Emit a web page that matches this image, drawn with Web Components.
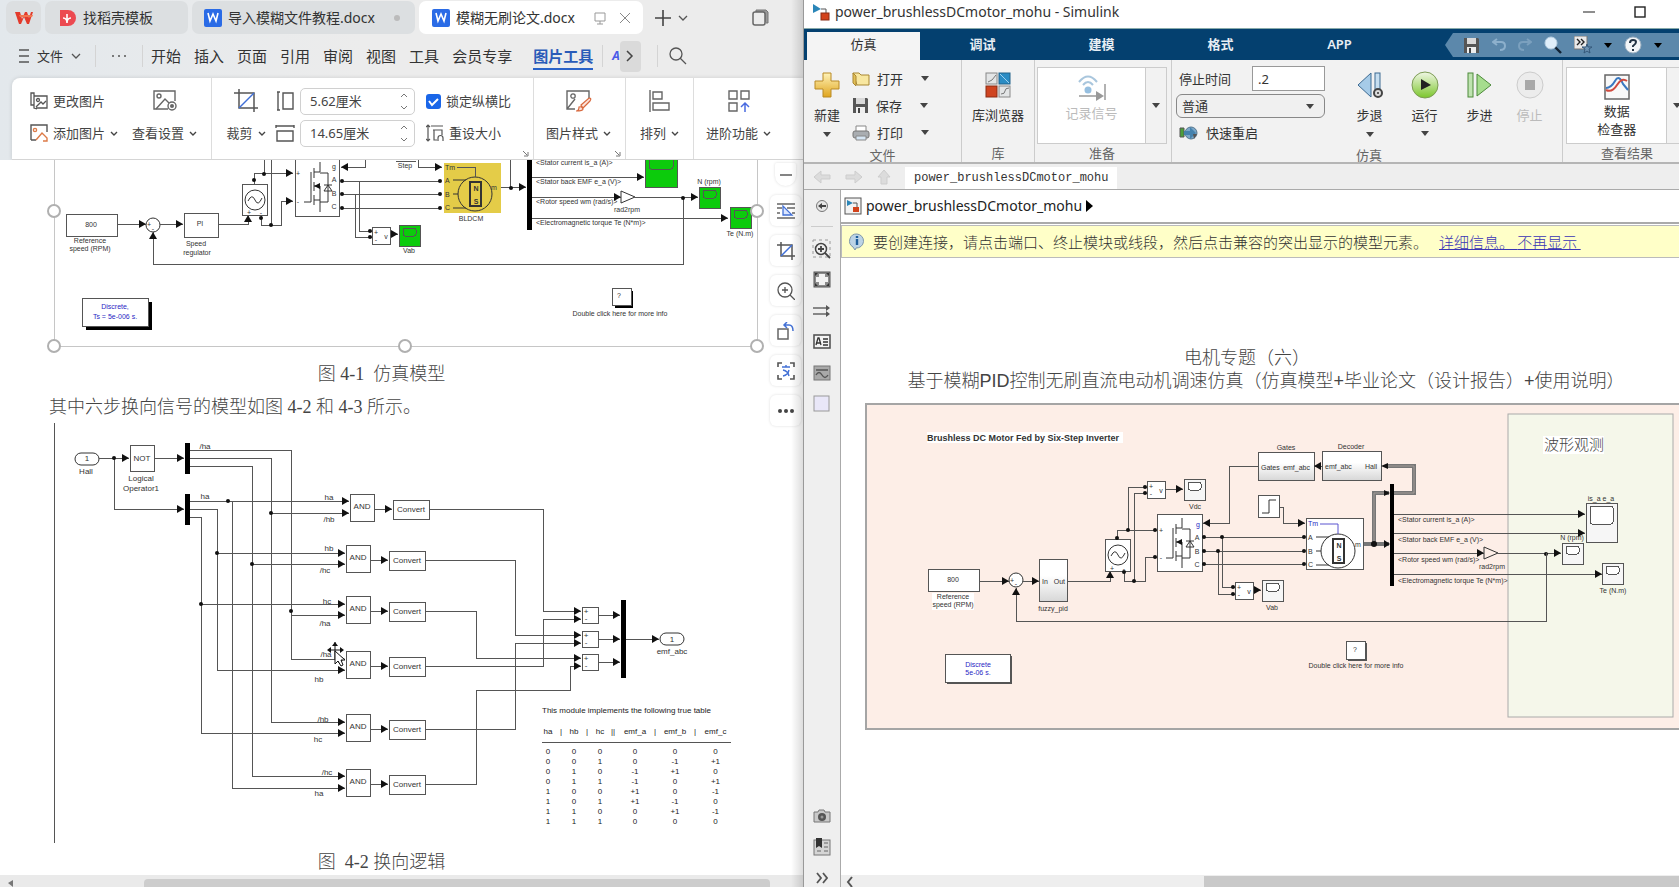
<!DOCTYPE html>
<html lang="zh-CN">
<head>
<meta charset="utf-8">
<title>power_brushlessDCmotor_mohu - Simulink</title>
<style>
html,body{height:100%}
body{margin:0;overflow:hidden;background:#fff;color:#333;font:13px/20px "Noto Sans","Noto Sans CJK SC",sans-serif}
</style>
</head>
<body>
<split-desktop>
  <wps-window slot="left"></wps-window>
  <simulink-window slot="right"></simulink-window>
</split-desktop>
<script>
const define = (name, css, html) => customElements.define(name, class extends HTMLElement {
  constructor() {
    super();
    this.attachShadow({ mode: 'open' }).innerHTML =
      `<style>*{box-sizing:border-box}${css}</style>${typeof html === 'function' ? html(this) : html}`;
  }
});

/* ---------- icons ---------- */
const floppy = '<path d="M1 1h14l1 1v14H1z" fill="#565656"/><path d="M4 1h9v6H4z" fill="#d9d9d9"/><path d="M4 10h9v6H4z" fill="#eee"/><path d="M6 11h2v5H6z" fill="#444"/>';
const crop = '<g fill="none" stroke="#555" stroke-width="1.5"><path d="M5 0v19h19M0 4h20v19"/><path d="M5 19 20 4" stroke="#3f6fd8"/></g>';
const ICONS = {
  wps: [18, 14, '<path d="M0 1h5l2 7 3-7h2l2 6 2-6h2l-4 12h-2l-3-7-3 7H4z" fill="#e33b2c"/><path d="M4 4h14l-1 2H5z" fill="#f2754f"/>'],
  docer: [17, 18, '<path d="M1 1h8a8 8 0 0 1 0 16H1z" fill="#ec4a51"/><path d="M4 9c4 0 4 5 4 5s0-5 4-5M8 13V5" stroke="#fff" stroke-width="1.6" fill="none"/>'],
  word: [18, 18, '<rect width="18" height="18" rx="2" fill="#2a6be6"/><path d="m4 4 2 8 3-7 3 7 2-8" fill="none" stroke="#fff" stroke-width="1.6"/>'],
  screen: [14, 14, '<path d="M2 2h10v8H2zM4 13h6M7 10v3" fill="none" stroke="#999"/>'],
  close: [12, 12, '<path d="m1 1 10 10M11 1 1 11" stroke="#888" fill="none"/>'],
  plus: [16, 16, '<path d="M8 0v16M0 8h16" stroke="#444" stroke-width="1.6"/>'],
  chev: [10, 6, '<path d="m1 1 4 4 4-4" fill="none" stroke="#555" stroke-width="1.3"/>'],
  chevs: [8, 5, '<path d="m1 1 3 3 3-3" fill="none" stroke="#444" stroke-width="1.4"/>'],
  up: [8, 5, '<path d="m1 4 3-3 3 3" fill="none" stroke="#777"/>'],
  down: [8, 5, '<path d="m1 1 3 3 3-3" fill="none" stroke="#777"/>'],
  right: [8, 12, '<path d="m1 1 5 5-5 5" fill="none" stroke="#444" stroke-width="1.5"/>'],
  restore: [17, 17, '<path d="M4 3V1h10l2 2v11h-2" fill="#999" stroke="#777"/><rect x="1" y="3" width="12" height="13" rx="2" fill="#ececec" stroke="#666" stroke-width="1.5"/>'],
  menu: [10, 14, '<path d="M0 1h10M0 7h10M0 13h10" stroke="#555" stroke-width="1.3"/>'],
  dots: [16, 4, '<g fill="#555"><circle cx="2" cy="2" r="1"/><circle cx="8" cy="2" r="1"/><circle cx="14" cy="2" r="1"/></g>'],
  dots3: [16, 6, '<g fill="#444"><circle cx="2" cy="3" r="2"/><circle cx="8" cy="3" r="2"/><circle cx="14" cy="3" r="2"/></g>'],
  search: [18, 18, '<circle cx="7" cy="7" r="6" fill="none" stroke="#555" stroke-width="1.3"/><path d="m11 11 6 6" stroke="#555" stroke-width="1.3"/>'],
  launch: [6, 6, '<path d="M0 0l4 4M5 1v4H1" fill="none" stroke="#777"/>'],
  swap: [18, 18, '<g fill="none" stroke="#555" stroke-width="1.3"><path d="M4 4V1H1v12h3M4 4h13v12H6M4 4v12l3 1"/><circle cx="8" cy="8" r="1.5"/><path d="m6 15 5-5 2 2 3-3"/></g>'],
  addpic: [18, 18, '<path d="M1 16V1h16v7M1 16h5" fill="none" stroke="#555" stroke-width="1.4"/><g fill="none" stroke="#dd7b48" stroke-width="1.4"><circle cx="5" cy="6" r="1.6"/><path d="m6 16 6-7 5 5v3h-4"/></g>'],
  view: [24, 24, '<g fill="none" stroke="#666" stroke-width="1.4"><path d="M15 20H1V2h21v10"/><circle cx="6" cy="7" r="2"/><path d="m3 20 9-10 4 4"/><circle cx="19" cy="17" r="4"/></g><circle cx="19" cy="17" r="2" fill="#666"/>'],
  crop: [24, 24, crop],
  cropsm: [18, 18, '<g fill="none" stroke="#555" stroke-width="1.5"><path d="M4 0v14h14M0 3h15v15"/><path d="M4 14 15 3" stroke="#3f6fd8"/></g>'],
  tall: [18, 20, '<path d="M1 1h3M2 1v18M1 19h3M7 2h10v16H7z" fill="none" stroke="#555" stroke-width="1.4"/>'],
  wide: [20, 18, '<path d="M1 1v3M1 2h18M19 1v3M2 7h16v10H2z" fill="none" stroke="#555" stroke-width="1.4"/>'],
  reset: [18, 18, '<path d="M2 1v16M0 3l2-2 2 2M0 15l2 2 2-2M5 2h12M7 6h9v5M8 6v10h3M12 17v-3a2 2 0 0 1 5 0v3" fill="none" stroke="#555" stroke-width="1.2"/>'],
  style: [26, 24, '<path d="M9 20H1V2h22v7M1 20 9 10" fill="none" stroke="#666" stroke-width="1.4"/><circle cx="7" cy="7" r="2.2" fill="none" stroke="#666" stroke-width="1.3"/><path d="m15 16 8-7q3 0 1 3l-7 7zM10 22q3 0 3-4 3-1 4 2 0 2-7 2z" fill="#fbe3da" stroke="#d8683d" stroke-width="1.2"/>'],
  align: [22, 22, '<path d="M1 0v22M4 2h9v7H4zM4 13h16v7H4z" fill="none" stroke="#666" stroke-width="1.4"/>'],
  more: [22, 22, '<path d="M1 1h8v8H1zM13 1h8v8h-8zM1 13h8v8H1z" fill="none" stroke="#666" stroke-width="1.4"/><path d="M17 22v-9M13 17l4-4 4 4" fill="none" stroke="#4a6be0" stroke-width="1.5"/>'],
  minus: [12, 4, '<path d="M0 2h12" stroke="#666" stroke-width="1.6"/>'],
  wrap: [18, 16, '<path d="M0 1h18M0 5h5M10 5h8M0 10h3M15 10h3M0 15h18" stroke="#666" stroke-width="1.4"/><path d="M6 3v9h9z" fill="#dbe6ff" stroke="#4371d6" stroke-width="1.3"/>'],
  zoomin: [18, 18, '<g fill="none" stroke="#555" stroke-width="1.3"><circle cx="8" cy="8" r="7"/><path d="m13 13 5 5M8 5v6M5 8h6"/></g>'],
  rotate: [18, 18, '<rect x="1" y="7" width="10" height="10" fill="none" stroke="#666" stroke-width="1.5"/><path d="M7 3h5q4 0 4 6M10 0 7 3l3 3" fill="none" stroke="#4371d6" stroke-width="1.5"/>'],
  scan: [18, 18, '<path d="M1 5V1h4M13 1h4v4M17 13v4h-4M5 17H1v-4" fill="none" stroke="#555" stroke-width="1.6"/><path d="M5 5h8M9 3v2M6 8q5 1 6 6M12 8q-1 5-6 6" fill="none" stroke="#4371d6" stroke-width="1.4"/>'],
  /* Simulink */
  model: [18, 18, '<path d="M1 1v9l8-4z" fill="#2b86b8"/><path d="M9 6h5v4" fill="none" stroke="#555"/><rect x="9" y="10" width="8" height="7" fill="#d2431c" stroke="#8a2d14"/>'],
  modelbox: [18, 18, '<rect x="1" y="1" width="16" height="16" fill="#f3f3f3" stroke="#555"/><path d="M3 3v6l6-3z" fill="#2b86b8"/><path d="M9 6h4v4" fill="none" stroke="#555"/><rect x="9" y="10" width="6" height="5" fill="#d2431c"/>'],
  min: [12, 12, '<path d="M0 6h12" stroke="#444" stroke-width="1.2"/>'],
  max: [12, 12, '<rect x="1" y="1" width="10" height="10" fill="none" stroke="#222" stroke-width="1.4"/>'],
  tri: [8, 5, '<path d="M0 0h8L4 5z" fill="#444"/>'],
  trib: [8, 5, '<path d="M0 0h8L4 5z" fill="#000"/>'],
  play: [7, 12, '<path d="M0 0v12l7-6z" fill="#000"/>'],
  newp: [26, 26, '<defs><linearGradient id="y" x1="0" y1="0" x2="0" y2="1"><stop stop-color="#fff3b8"/><stop offset="1" stop-color="#e0a51f"/></linearGradient></defs><path d="M9 1h8v8h8v8h-8v8H9v-8H1V9h8z" fill="url(#y)" stroke="#b98a25"/>'],
  open: [18, 16, '<path d="M1 2h6l2 2h8v10H5z" fill="#f8e7a0" stroke="#a98732"/><path d="M1 2l3 3v10l-3-3z" fill="#e3bf56" stroke="#a98732"/>'],
  save: [17, 17, floppy],
  print: [18, 16, '<path d="M4 1h10v6H4z" fill="#fff" stroke="#888"/><rect x="1" y="6" width="16" height="7" rx="2" fill="#a9adb1" stroke="#777"/><path d="M4 11h10v4H4z" fill="#d5e5f3" stroke="#888"/>'],
  lib: [26, 26, '<rect x="1" y="1" width="11" height="11" fill="#e3e5e6" stroke="#888"/><path d="m3 10 4-2 4-5" stroke="#777" fill="none"/><rect x="14" y="1" width="11" height="11" fill="#2a8cc4" stroke="#23638a"/><path d="m15 2 9 9" stroke="#9fd0ee"/><rect x="1" y="14" width="11" height="11" fill="#cf4420" stroke="#8a2d14"/><rect x="14" y="14" width="11" height="11" fill="#e3e5e6" stroke="#888"/><path d="M16 22q4 0 4-3t4-3" stroke="#777" fill="none"/>'],
  log: [28, 28, '<g fill="none" stroke="#a9c6dd" stroke-width="2"><path d="M1 8q9-11 18 0M5 11q5-6 10 0"/></g><circle cx="10" cy="16" r="3.5" fill="#96bfe0"/><path d="M1 22h18M27 10v16" stroke="#999" stroke-width="1.5"/><path d="M18 17v10l8-5z" fill="#999"/>'],
  fast: [20, 14, '<path d="M1 2h4v9H1z" fill="#4c9f3a" stroke="#555"/><circle cx="12" cy="7" r="6" fill="#7aa7c9" stroke="#55758d"/><path d="M5 5h6V1l6 6-6 6V9H5z" fill="#4582ad"/><path d="M14 8l4 0-3 5z" fill="#555"/>'],
  back: [26, 26, '<path d="M14 1v24L1 13z" fill="#a6cbe8" stroke="#3d6a91"/><rect x="18" y="1" width="5" height="18" fill="#c6def0" stroke="#3d6a91"/><circle cx="21" cy="21" r="4" fill="#ddd" stroke="#444" stroke-width="2"/><circle cx="21" cy="21" r="1" fill="#333"/>'],
  run: [28, 28, '<defs><linearGradient id="g" x1="0" y1="0" x2="0" y2="1"><stop stop-color="#f1f7e6"/><stop offset="1" stop-color="#7bc62b"/></linearGradient></defs><circle cx="14" cy="14" r="13" fill="url(#g)" stroke="#7d9c55"/><path d="M10 8v11l10-5z" fill="#222"/>'],
  fwd: [26, 26, '<rect x="1" y="1" width="5" height="24" fill="#bfe3b0" stroke="#4d8a3b"/><path d="M10 2v22l14-11z" fill="#a6dd8e" stroke="#4d8a3b"/>'],
  stop: [28, 28, '<circle cx="14" cy="14" r="13" fill="#ececec" stroke="#ccc"/><rect x="9" y="9" width="10" height="10" fill="#a8a8a8"/>'],
  insp: [26, 26, '<rect x="1" y="1" width="24" height="24" fill="#f8f8f8" stroke="#666" stroke-width="1.5"/><path d="M2 14q5 0 9-7t8 3l5 6" fill="none" stroke="#3a78c0" stroke-width="2"/><path d="M2 16q6 3 11-5t10-4" fill="none" stroke="#d04a3e" stroke-width="2"/>'],
  undo: [14, 14, '<path d="M1 4h8q4 0 4 4t-5 4M5 1 1 4l4 3" fill="none" stroke="#8db0cc" stroke-width="2"/>'],
  redo: [14, 14, '<path d="M13 4H5Q1 4 1 8t5 4M9 1l4 3-4 3" fill="none" stroke="#7ba0be" stroke-width="2"/>'],
  find: [18, 18, '<path d="m10 10 7 7" stroke="#123" stroke-width="2.4"/><circle cx="7" cy="7" r="6" fill="#dfeefa" stroke="#b7cfe2"/>'],
  fav: [18, 18, '<rect width="13" height="13" fill="#e9e9e9" stroke="#777"/><path d="m3 3 3 3-3 3M7 3l3 3-3 3" fill="none" stroke="#222" stroke-width="1.4"/><path d="m13 8 1 3h4l-3 2 1 4-3-2-3 2 1-4-3-2h4z" fill="#6d93b3" stroke="#35587a"/>'],
  help: [18, 18, '<circle cx="9" cy="9" r="8" fill="#f2f5f8" stroke="#9db1c2"/><path d="M6 7q0-3 3-3t3 2q0 2-3 4v1M9 13v2" fill="none" stroke="#234" stroke-width="2"/>'],
  aleft: [18, 14, '<path d="M8 1 1 7l7 6V9h9V5H8z" fill="#dcdcdc" stroke="#cdcdcd"/>'],
  aright: [18, 14, '<path d="m10 1 7 6-7 6V9H1V5h9z" fill="#dcdcdc" stroke="#cdcdcd"/>'],
  aup: [14, 16, '<path d="m7 1 6 7h-3v7H4V8H1z" fill="#dcdcdc" stroke="#cdcdcd"/>'],
  hide: [14, 14, '<circle cx="7" cy="7" r="5.5" fill="#e6e6e6" stroke="#777"/><path d="M3 7l4-3v2h4v2H7v2z" fill="#444"/>'],
  rzoom: [20, 20, '<path d="M1 1h17v17H1z" fill="none" stroke="#999" stroke-dasharray="3 3"/><circle cx="9" cy="10" r="5.5" fill="#eee" stroke="#444" stroke-width="1.5"/><path d="m13 14 5 5M9 7v6M6 10h6" stroke="#444" stroke-width="1.8"/>'],
  fit: [18, 17, '<rect x="1" y="1" width="16" height="15" fill="#8a8a8a" stroke="#555"/><path d="M6 3h6v3h3v5h-3v3H6v-3H3V6h3z" fill="#f2f2f2"/><path d="M2 2h3L2 5zM16 2v3l-3-3zM2 15v-3l3 3zM16 15h-3l3-3z" fill="#333"/>'],
  lines: [18, 12, '<path d="M0 3h14M0 9h14" stroke="#666" stroke-width="1.6"/><path d="M13 0l4 3-4 3zM13 6l4 3-4 3z" fill="#555"/>'],
  anno: [18, 15, '<rect x="1" y="1" width="16" height="13" fill="#f4f4f4" stroke="#555" stroke-width="1.6"/><path d="m3 11 2-7h1l2 7M4 9h3M10 5h5M10 8h5M10 11h5" fill="none" stroke="#333" stroke-width="1.3"/>'],
  img: [18, 16, '<rect x="1" y="1" width="16" height="14" fill="#a9a9a9" stroke="#777"/><path d="M3 5h12M3 10q3-5 6 0t6 0" fill="none" stroke="#555" stroke-width="1.4"/>'],
  area: [18, 18, '<rect x="1" y="1" width="15" height="15" fill="#e9e7f8" stroke="#999"/>'],
  cam: [18, 14, '<path d="M1 3h4l1-2h5l1 2h5v10H1z" fill="#c9c9c9" stroke="#777"/><circle cx="9" cy="8" r="4" fill="#555"/><circle cx="9" cy="8" r="1.5" fill="#999"/>'],
  book: [18, 18, '<rect x="1" y="2" width="16" height="15" fill="#d5d5d5" stroke="#777"/><path d="M3 0h6v10L6 8l-3 2z" fill="#333"/><path d="M11 5h4M11 9h4M4 13h4M11 13h4" stroke="#666"/>'],
  dbl: [12, 12, '<path d="m1 1 4 5-4 5M7 1l4 5-4 5" fill="none" stroke="#555" stroke-width="1.8"/>'],
  info: [18, 18, '<path d="M9 1a7 7 0 1 1-1 14l-1 2-2-3A7 7 0 0 1 9 1z" fill="#bcd3e6" stroke="#7e97ab"/><path d="M9 3v2M9 6v6" stroke="#1e5d99" stroke-width="2.4"/>'],
};
class UiIcon extends HTMLElement {
  constructor() { super(); this.attachShadow({ mode: 'open' }); }
  connectedCallback() {
    const [w, h, body] = ICONS[this.getAttribute('name')];
    this.shadowRoot.innerHTML = `<style>:host{display:inline-flex;flex:none}svg{display:block}</style><svg width="${w}" height="${h}" viewBox="0 0 ${w} ${h}" aria-hidden="true">${body}</svg>`;
  }
}
customElements.define('ui-icon', UiIcon);
const ic = n => `<ui-icon name="${n}"></ui-icon>`;

/* ---------- block diagram drawing ---------- */
const F = (x1, y1, x2, y2, fill = '#fff', extra = '') => `<rect class="b" x="${x1}" y="${y1}" width="${x2 - x1}" height="${y2 - y1}" fill="${fill}" ${extra}/>`;
const bar = (x1, y1, x2, y2) => `<rect x="${x1}" y="${y1}" width="${x2 - x1}" height="${y2 - y1}" fill="#000"/>`;
const T = (x, y, s, anchor = 'middle', cls = '') => `<text x="${x}" y="${y + 3}" text-anchor="${anchor}" class="${cls}">${s.replace(/</g, '&lt;')}</text>`;
const dot = (x, y) => `<circle cx="${x}" cy="${y}" r="2" class="d"/>`;
const dots = a => a.map(([x, y]) => dot(x, y)).join('');
const W = (pts, head = true) => {
  const p = pts.trim().split(/\s+/).map(s => s.split(',').map(Number));
  let out = `<polyline class="w" points="${pts}"/>`;
  if (head) {
    const [x, y] = p[p.length - 1], [a, b] = p[p.length - 2];
    const dx = Math.sign(x - a), dy = Math.sign(y - b);
    out += `<polygon class="d" points="${x},${y} ${x - 7 * dx + 4 * dy},${y - 7 * dy + 4 * dx} ${x - 7 * dx - 4 * dy},${y - 7 * dy - 4 * dx}"/>`;
  }
  return out;
};
const scope = (x, y, w, h, fill, screen) => F(x, y, x + w, y + h, fill) + `<rect class="b" x="${x + 4}" y="${y + 3}" width="${w - 8}" height="${w > 25 ? 18 : 8}" rx="2" fill="${screen}"/>`;
const source = (x, y, h) => F(x, y, x + 25, y + h) + `<circle class="c" cx="${x + 13}" cy="${y + 16}" r="10"/><path class="c" d="M${x + 6} ${y + 17}q4-8 7-1t7-2"/>` + T(x + 7, y + h - 3, '+') + T(x + 19, y + h - 3, '-');
const mosfet = (x, y) => `<path class="c" d="M${x + 16} ${y}v10h-6M${x + 16} ${y + 50}v-26h-6M${x + 10} ${y + 38}h6M${x + 10} ${y + 6}v10M${x + 10} ${y + 20}v9M${x + 10} ${y + 33}v10M${x + 7} ${y + 10}v30h-7M${x + 16} ${y + 11}h8v29h-8M${x + 20} ${y + 23}h8"/><path class="c" d="M${x + 20} ${y + 29}h8l-4-6z"/><path class="d" d="M${x + 10} ${y + 24}l6-3v6z"/>`;
const motor = (x, y) => `<circle class="c" cx="${x}" cy="${y}" r="17"/><path class="c" d="M${x - 22} ${y - 14}h13M${x - 22} ${y}h5M${x - 22} ${y + 14}h13"/><rect class="c h" x="${x - 5}" y="${y - 12}" width="11" height="24"/>` + T(x + 1, y - 6, 'N', 'middle', 'bold') + T(x + 1, y + 7, 'S', 'middle', 'bold');
const measure = (x, y) => F(x, y, x + 18, y + 17) + T(x + 4, y + 5, '+') + T(x + 4, y + 12, '-') + T(x + 14, y + 9, 'v');
const svgCss = `svg{display:block;overflow:hidden;font:7px/1 "Liberation Sans",sans-serif}
text{fill:#333}.b{stroke:#555;stroke-width:1;shape-rendering:crispEdges}.w{fill:none;stroke:#555;stroke-width:1;shape-rendering:crispEdges}
.c{fill:none;stroke:#333;stroke-width:1}.h{stroke-width:2}.d{fill:#111}.blue{fill:#2a1fc4}.bold{font-weight:700}`;

define('model-figure', `:host{display:block}${svgCss}.sel{fill:none;stroke:#c6c6c6;stroke-width:1;shape-rendering:crispEdges}.hd{fill:#fff;stroke:#b0b0b0;stroke-width:2}`, () => {
  const G = '#0ccb0c';
  return `<svg width="771" height="196" viewBox="0 160 771 196" role="img" aria-label="仿真模型">
  <path class="sel" d="M54 150V346H757V150"/>
  ${F(66, 214, 117, 236)}${T(91, 224, '800')}${T(90, 240, 'Reference')}${T(90, 248, 'speed (RPM)')}
  ${W('117,224 146,224')}<circle class="c" cx="153" cy="225" r="7"/>${T(149, 224, '+')}${T(153, 228, '-')}
  ${W('160,224 183,224')}${F(184, 213, 218, 237)}${T(200, 223, 'PI')}${T(196, 243, 'Speed')}${T(197, 252, 'regulator')}
  ${W('218,224 248,224 248,215')}${source(242, 184, 31)}
  ${W('254,184 254,173 293,173')}${W('261,216 261,225 281,225 281,201 293,201')}
  ${W('264,150 264,174', false)}${W('271,150 271,225', false)}${dots([[264, 174], [271, 225], [254, 180], [261, 218]])}
  ${F(295, 140, 339, 216)}${mosfet(304, 162)}${T(298, 173, '+')}${T(298, 201, '-')}
  ${T(334, 166, 'g')}${T(334, 179, 'A')}${T(334, 193, 'B')}${T(334, 206, 'C')}
  ${W('365,150 365,167 341,167')}${W('341,181 440,181', false)}${W('341,194 440,194', false)}${W('341,208 440,208', false)}
  ${W('359,181 359,231 372,231', false)}${W('355,194 355,237 372,237', false)}
  ${dots([[342, 181], [342, 194], [342, 208], [440, 181], [440, 194], [440, 208], [370, 231], [370, 237]])}
  ${measure(372, 227)}${W('390,234 398,234')}${scope(399, 225, 21, 21, G, G)}${T(409, 250, 'Vab')}
  ${W('396,161 416,161', false)}${T(405, 165, 'Step')}${W('418,150 418,167 442,167')}
  <rect x="444" y="163" width="57" height="50" fill="#e4cc48"/>${motor(475, 194)}${W('457,167 475,167 475,177', false)}
  ${T(445, 167, 'Tm', 'start')}${T(445, 180, 'A', 'start')}${T(445, 194, 'B', 'start')}${T(445, 207, 'C', 'start')}${T(494, 187, 'm')}
  ${T(471, 218, 'BLDCM')}
  ${W('501,187 526,187')}${W('510,150 510,187', false)}${dot(511, 188)}${bar(527, 150, 532, 230)}
  ${W('532,177 644,177')}${scope(645, 148, 32, 39, G, G)}
  ${W('532,197 621,197')}<path class="c" d="M621 191v12l14-6z"/>${W('635,197 698,197')}${scope(699, 187, 21, 21, G, G)}${T(709, 181, 'N (rpm)')}
  ${W('532,218 728,218')}${scope(730, 207, 21, 21, G, G)}${T(740, 233, 'Te (N.m)')}
  ${T(536, 162, '<Stator current is_a (A)>', 'start')}${T(536, 181, '<Stator back EMF e_a (V)>', 'start')}${T(536, 201, '<Rotor speed wm (rad/s)>', 'start')}${T(536, 222, '<Electromagnetic torque Te (N*m)>', 'start')}${T(627, 209, 'rad2rpm')}
  ${W('683,197 683,264 153,264 153,232')}${dot(683, 198)}
  <path d="M86 302h66v28H86z" fill="#000"/>${F(82, 298, 148, 326)}${T(115, 306, 'Discrete,', 'middle', 'blue')}${T(115, 316, 'Ts = 5e-006 s.', 'middle', 'blue')}
  <path d="M615 291h18v17h-18z" fill="#000"/>${F(612, 288, 631, 305)}${T(619, 295, '?')}${T(620, 313, 'Double click here for more info')}
  ${[[54, 211], [757, 211], [54, 346], [405, 346], [757, 346]].map(([x, y]) => `<circle class="hd" cx="${x}" cy="${y}" r="6"/>`).join('')}
  </svg>`;
});

const TRUTH = ['0 0 0 0 0 0', '0 0 1 0 -1 +1', '0 1 0 -1 +1 0', '0 1 1 -1 0 +1', '1 0 0 +1 0 -1', '1 0 1 +1 -1 0', '1 1 0 0 +1 -1', '1 1 1 0 0 0'];
define('truth-table', `:host{display:block;font:8px/10px "Liberation Sans",sans-serif;color:#222}
table{border-collapse:collapse;table-layout:fixed;width:189px}caption{text-align:left;white-space:nowrap;padding-bottom:11px}
th,td{padding:0;font-weight:400;text-align:center;white-space:nowrap}thead th{padding-bottom:5px;border-bottom:1px solid #555}tbody tr:first-child td{padding-top:4px}`,
`<table><caption>This module implements the following true table</caption>
<colgroup><col style="width:12px"><col style="width:14px"><col style="width:12px"><col style="width:14px"><col style="width:12px"><col style="width:14px"><col style="width:30px"><col style="width:10px"><col style="width:30px"><col style="width:10px"><col></colgroup>
<thead><tr><th>ha</th><th>|</th><th>hb</th><th>|</th><th>hc</th><th>||</th><th>emf_a</th><th>|</th><th>emf_b</th><th>|</th><th>emf_c</th></tr></thead>
<tbody>${TRUTH.map(r => '<tr>' + r.split(' ').map(v => `<td>${v}</td>`).join('<td></td>') + '</tr>').join('')}</tbody></table>`);

define('logic-figure', `:host{display:block;position:relative}${svgCss}svg{font-size:8px}truth-table{position:absolute;left:542px;top:284px}`, () => {
  const rows = [[350, 494, 501, 513], [346, 545, 553, 564], [346, 596, 604, 615], [346, 651, 659, 670], [346, 714, 722, 733], [346, 769, 776, 788]];
  const gates = rows.map(([x, y]) => F(x, y, x + 24, y + 27) + T(x + 12, y + 12, 'AND') + W(`${x + 24},${y + 15} ${x + 42},${y + 15}`) + F(x + 43, y + 6, x + 79, y + 25) + T(x + 61, y + 15, 'Convert')).join('');
  const lab = [[205, 446, '/ha'], [205, 496, 'ha'], [329, 497, 'ha'], [329, 519, '/hb'], [329, 548, 'hb'], [325, 570, '/hc'], [327, 601, 'hc'], [325, 623, '/ha'], [326, 654, '/ha'], [319, 679, 'hb'], [323, 719, '/hb'], [318, 739, 'hc'], [327, 772, '/hc'], [319, 793, 'ha']];
  const sum = y => F(582, y, 598, y + 16) + T(586, y + 4, '+') + T(586, y + 11, '-') + W(`598,${y + 8} 620,${y + 8}`);
  return `<svg width="771" height="422" viewBox="0 422 771 422" role="img" aria-label="换向逻辑">
  <path d="M54 423h1v420h-1z" fill="#555"/>
  <rect class="c" x="75" y="453" width="24" height="12" rx="6"/>${T(87, 458, '1')}${T(86, 471, 'Hall')}
  ${W('99,458 129,458')}${F(130, 445, 154, 471)}${T(142, 458, 'NOT')}${T(141, 478, 'Logical')}${T(141, 488, 'Operator1')}
  ${W('154,458 184,458')}${bar(185, 443, 190, 474)}${W('114,458 114,509 184,509')}${bar(185, 494, 190, 525)}
  ${W('190,450 291,450 291,659 345,659')}${W('291,615 345,615')}${W('190,458 271,458 271,722 345,722')}${W('271,513 349,513')}
  ${W('190,466 252,466 252,776 345,776')}${W('252,564 345,564')}${W('190,501 349,501')}${W('232,501 232,788 345,788')}
  ${W('190,509 217,509 217,670 345,670')}${W('217,553 345,553')}${W('190,517 201,517 201,733 345,733')}${W('201,604 345,604')}
  ${dots([[114, 458], [291, 611], [271, 513], [252, 564], [228, 501], [217, 553], [201, 604]])}
  ${gates}${lab.map(l => T(...l)).join('')}
  ${W('429,509 543,509 543,611 581,611')}${W('425,560 515,560 515,635 581,635')}${W('425,611 476,611 476,658 581,658')}
  ${W('425,666 543,666 543,619 581,619')}${W('425,729 515,729 515,643 581,643')}${W('425,784 476,784 476,690 570,690 570,666 581,666')}
  ${sum(607)}${sum(631)}${sum(654)}${bar(621, 600, 626, 678)}${W('626,639 659,639')}
  <rect class="c" x="660" y="633" width="24" height="12" rx="6"/>${T(672, 639, '1')}${T(672, 651, 'emf_abc')}
  <path d="M335 642v17M329 650h13" stroke="#111" fill="none"/><path d="M335 642l-3 4h6zM327 650l4-3v6zM344 650l-4-3v6z" fill="#111"/>
  <path d="M335 651v13l3-3 3 5 2-1-2-5h4z" fill="#fff" stroke="#111"/>
  </svg><truth-table></truth-table>`;
});

/* ---------- left window ---------- */
define('wps-titlebar', `:host{display:flex;height:34px;padding:1px 34px 0 6px;gap:4px;align-items:stretch}
button{all:unset;box-sizing:border-box;display:flex;align-items:center;border-radius:7px;background:#dcdfe1;font-size:14px;color:#333;white-space:nowrap}
.home{width:35px;justify-content:center}.t2{width:143px;padding-left:14px;gap:7px}.t3{width:223px;padding-left:12px;gap:6px}.t4{width:224px;padding-left:13px;gap:6px;background:#fff}
.end{margin-left:auto;margin-right:15px;width:6px;height:6px;border-radius:3px;background:#bbb}
.t4 .s{margin-left:auto;margin-right:12px;display:flex;gap:12px;align-items:center}
.plain{background:none;padding:0 3px 0 8px}.last{margin-left:auto}`,
`<button class="home" aria-label="WPS">${ic('wps')}</button><button class="t2">${ic('docer')}找稻壳模板</button><button class="t3">${ic('word')}导入模糊文件教程.docx<i class="end"></i></button><button class="t4">${ic('word')}模糊无刷论文.docx<span class="s">${ic('screen')}${ic('close')}</span></button>
<button class="plain" aria-label="新建">${ic('plus')}</button><button class="plain" style="padding:0" aria-label="更多">${ic('chev')}</button><button class="plain last" style="padding:0" aria-label="还原">${ic('restore')}</button>`);

define('wps-menubar', `:host{display:flex;height:44px;align-items:center;padding-left:19px;font-size:15px;color:#333;position:relative}
button{all:unset;white-space:nowrap;display:flex;align-items:center}.file{font-size:13px;gap:8px}
i{width:1px;height:22px;background:#d4d4d4}nav{display:flex;gap:13px;margin-left:8px}
.on{color:#2a5bb8;font-weight:700;border-bottom:2px solid #2a62c8;padding:2px 0;margin:2px 0 0 8px}
.cut{color:#4a5be8;font-weight:700;font-size:12px;margin-left:9px;font-style:italic}.nx{width:21px;height:31px;justify-content:center;background:#dadada;border-radius:4px}`,
`<button class="file">${ic('menu')}文件 ${ic('chev')}</button><i style="margin-left:14px"></i><button style="margin:0 15px" aria-label="更多">${ic('dots')}</button><i></i>
<nav>${['开始', '插入', '页面', '引用', '审阅', '视图', '工具', '会员专享'].map(s => `<button>${s}</button>`).join('')}<button class="on">图片工具</button></nav>
<i style="margin-left:9px"></i><button class="cut">A</button><button class="nx" aria-label="向右">${ic('right')}</button><i style="margin:0 11px 0 16px"></i><button aria-label="搜索">${ic('search')}</button>`);

define('wps-ribbon', `:host{display:flex;height:82px;margin-left:12px;background:#fff;border-radius:8px 0 0 0;border-bottom:1px solid #d5d5d5;box-shadow:0 0 4px #0002;color:#444;position:relative}
section{display:flex;padding-top:7px;border-right:1px solid #ddd;position:relative}section:last-child{border:0}
.col{display:grid;grid-template-rows:32px 32px;justify-items:start;align-items:center;align-content:start}.col.c{justify-items:center}
button,label{all:unset;box-sizing:border-box;display:flex;align-items:center;gap:5px;white-space:nowrap;line-height:20px}
.num{display:flex;width:115px;height:27px;border:1px solid #d0d0d0;border-radius:5px;padding:0 6px 0 9px;align-items:center}
.num input{all:unset;width:80px;font-size:13px;line-height:20px}.num span{display:grid;gap:7px;margin-left:auto}
.chk input{appearance:none;margin:0;width:15px;height:15px;border-radius:3px;background:#1a66e8 url('data:image/svg+xml,<svg xmlns="http://www.w3.org/2000/svg" viewBox="0 0 15 15"><path d="m3 7 3 4 6-6" fill="none" stroke="white" stroke-width="2"/></svg>')}
.l{position:absolute;right:4px;bottom:2px;display:flex}`,
`<section style="width:200px;padding-left:18px"><div class="col"><button>${ic('swap')}更改图片</button><button>${ic('addpic')}添加图片${ic('chevs')}</button></div><div class="col c" style="margin-left:14px"><button aria-label="查看设置">${ic('view')}</button><button>查看设置${ic('chevs')}</button></div></section>
<section style="width:322px;padding-left:14px"><div class="col c" style="width:40px"><button aria-label="裁剪">${ic('crop')}</button><button>裁剪${ic('chevs')}</button></div>
<div class="col c" style="width:20px;margin-left:9px">${ic('tall')}${ic('wide')}</div>
<div class="col" style="margin-left:5px"><div class="num"><input aria-label="高度" value="5.62厘米"><span>${ic('up')}${ic('down')}</span></div><div class="num"><input aria-label="宽度" value="14.65厘米"><span>${ic('up')}${ic('down')}</span></div></div>
<div class="col" style="margin-left:11px"><label class="chk"><input type="checkbox" checked>锁定纵横比</label><button>${ic('reset')}重设大小</button></div><div class="l">${ic('launch')}</div></section>
<section style="width:92px;padding-left:12px"><div class="col c"><button aria-label="图片样式">${ic('style')}</button><button>图片样式${ic('chevs')}</button></div><div class="l">${ic('launch')}</div></section>
<section style="width:68px;padding-left:14px"><div class="col c"><button aria-label="排列">${ic('align')}</button><button>排列${ic('chevs')}</button></div></section>
<section style="padding-left:12px"><div class="col c"><button aria-label="进阶功能">${ic('more')}</button><button>进阶功能${ic('chevs')}</button></div></section>`);

define('picture-tools', `:host{display:grid;gap:9px}button{all:unset;box-sizing:border-box;width:31px;height:31px;display:flex;align-items:center;justify-content:center;border-radius:6px;box-shadow:0 0 3px #0002;background:#fff}button:first-of-type{height:23px;border-radius:2px 2px 12px 12px;width:21px;justify-self:center}`,
  [['minus', '收起'], ['wrap', '文字环绕'], ['cropsm', '裁剪'], ['zoomin', '放大'], ['rotate', '旋转'], ['scan', '识别'], ['dots3', '更多']].map(([n, l]) => `<button aria-label="${l}">${ic(n)}</button>`).join(''));

define('wps-window', `:host{display:flex;flex-direction:column;height:100%;overflow:hidden;position:relative;background:linear-gradient(90deg,#e3e8ec,#ececec 45%)}
main{flex:1;min-height:0;overflow:hidden;background:#fff;position:relative}
p{margin:0;padding:0 89px 0 49px;font:18px/30px "Liberation Serif","Noto Sans CJK SC",serif;font-weight:300;color:#444;white-space:nowrap}
.cap{text-align:center;line-height:36px;white-space:pre}
picture-tools{position:absolute;right:2px;top:3px}
.bar{height:12px;background:#eaeaea;display:flex;padding:4px 33px 0 144px;position:relative}.bar i{flex:1;background:#cdcdcd;border-radius:4px 4px 0 0}
.bar svg{position:absolute;left:8px;top:5px}
.edge{position:absolute;top:0;right:0;bottom:0;width:12px;background:linear-gradient(90deg,#0000,#0002);pointer-events:none}`,
`<wps-titlebar></wps-titlebar><wps-menubar></wps-menubar><wps-ribbon></wps-ribbon>
<main><model-figure></model-figure><p class="cap">图 4-1  仿真模型</p><p>其中六步换向信号的模型如图 4-2 和 4-3 所示。</p><logic-figure></logic-figure><p class="cap">图  4-2 换向逻辑</p><picture-tools></picture-tools></main>
<div class="bar"><svg width="6" height="7"><path d="M5 0v7L0 3z" fill="#777"/></svg><i></i></div><div class="edge"></div>`);

/* ---------- right window ---------- */
define('sl-toolstrip', `:host{display:block}
.tabs{display:flex;height:32px;background:#04406f;padding:3px 0 0 3px;border-top:1px solid #8aa}
.tabs button{all:unset;width:119px;text-align:center;color:#e8eef4;font:600 13px/24px "Noto Sans","Noto Sans CJK SC",sans-serif;padding-bottom:4px}
.tabs .on{width:113px;background:#f4f4f4;color:#333;font-weight:400}
.quick{margin:1px 0 3px auto;width:234px;padding-left:18px;display:flex;align-items:center;gap:12px;background:#5c88ab;clip-path:polygon(8px 0,100% 0,100% 100%,8px 100%,0 50%)}
.rib{display:flex;height:104px;background:#f2f2f2;border-bottom:2px solid #b5b5b5;color:#333}
section{display:flex;flex-direction:column;border-right:1px solid #ccc;padding-top:5px;flex:none}
h3{margin:auto 0 0;font:13px/18px "Noto Sans","Noto Sans CJK SC",sans-serif;color:#666;text-align:center}
.body{display:flex;height:81px}
.rib button,.rib label{all:unset;box-sizing:border-box;white-space:nowrap;display:flex;align-items:center}
.rib .big{flex-direction:column;line-height:18px;padding-top:7px;gap:8px}.rib .round{padding-top:6px;gap:7px}
.rib .gal .big{background:#fff;gap:2px;padding-top:6px}
.rows{display:grid;grid-template-rows:repeat(3,27px);align-items:center}
.rib .rows button{gap:7px}.gal{height:77px;margin-top:2px;border:1px solid #ccc;display:flex}
.rib .gal .dd{width:21px;justify-content:center;border-left:1px solid #ccc}
.rib button:disabled{color:#bbb}
input{all:unset;box-sizing:border-box;width:73px;height:25px;border:1px solid #999;background:#fff;padding:0 5px;font-size:13px}
.rib .sel{position:relative}.sel ui-icon{position:absolute;right:11px;top:10px;pointer-events:none}
select{appearance:none;width:149px;height:24px;border:1px solid #888;border-radius:6px;background:#f0f0f0;padding:0 5px;font:13px/20px "Noto Sans CJK SC",sans-serif;color:#333}`,
`<div class="tabs"><button class="on">仿真</button><button style="margin-left:3px">调试</button><button>建模</button><button>格式</button><button>APP</button>
<div class="quick">${ic('save')}${ic('undo')}${ic('redo')}${ic('find')}${ic('fav')}${ic('trib')}${ic('help')}${ic('trib')}</div></div>
<div class="rib">
<section style="width:158px"><div class="body"><button class="big" style="width:46px">${ic('newp')}新建${ic('tri')}</button><div class="rows" style="margin-left:2px">${[['open', '打开'], ['save', '保存'], ['print', '打印']].map(([n, l]) => `<button>${ic(n)}${l}<span style="width:4px"></span>${ic('tri')}</button>`).join('')}</div></div><h3>文件</h3></section>
<section style="width:73px"><div class="body"><button class="big" style="margin:0 auto">${ic('lib')}库浏览器</button></div><h3>库</h3></section>
<section style="width:137px;padding-left:2px;padding-right:4px"><div class="gal"><button class="big" disabled style="width:107px">${ic('log')}记录信号</button><button class="dd" aria-label="更多">${ic('tri')}</button></div><h3>准备</h3></section>
<section style="width:391px;padding-left:4px"><div class="body"><div class="rows"><div style="display:flex;align-items:center;justify-content:space-between;padding-left:3px"><label for="st">停止时间</label><input id="st" value=".2"></div><label class="sel"><select aria-label="仿真模式"><option>普通</option></select>${ic('tri')}</label><button style="padding-left:3px">${ic('fast')}快速重启</button></div>
<div style="display:flex;margin-left:17px"><button class="big" style="width:55px">${ic('back')}步退${ic('tri')}</button><button class="big round" style="width:55px">${ic('run')}运行${ic('tri')}</button><button class="big" style="width:55px">${ic('fwd')}步进</button><button class="big round" disabled style="width:45px">${ic('stop')}停止</button></div></div><h3>仿真</h3></section>
<section style="width:125px;padding-left:3px;border:0"><div class="gal"><button class="big" style="width:101px">${ic('insp')}<span style="text-align:center">数据<br>检查器</span></button><button class="dd" aria-label="更多">${ic('tri')}</button></div><h3>查看结果</h3></section></div>`);

define('sl-canvas', `:host{display:block}${svgCss}.t{font:300 18px "Liberation Sans","Noto Sans CJK SC",sans-serif;fill:#444}.m{font:300 15px "Noto Sans CJK SC",sans-serif;fill:#444}.bt{font-size:9px;font-weight:700}`, () => {
  const S = (x, y, w = 21, h = 21) => scope(x, y, w, h, '#f6f6f6', '#fff');
  return `<svg width="838" height="617" viewBox="841 258 838 617" role="img" aria-label="Simulink model">
  <defs><linearGradient id="sub" x1="0" y1="0" x2="0" y2="1"><stop offset=".4" stop-color="#fff"/><stop offset="1" stop-color="#d8d8d8"/></linearGradient></defs>
  <text class="t" x="1247" y="364" text-anchor="middle">电机专题（六）</text>
  <text class="t" x="1266" y="387" text-anchor="middle">基于模糊PID控制无刷直流电动机调速仿真（仿真模型+毕业论文（设计报告）+使用说明）</text>
  <rect x="866" y="404" width="830" height="325" fill="#fdeee7" stroke="#a5a5a5" stroke-width="2"/>
  <rect x="1508" y="414" width="165" height="303" fill="#f5f7ea" stroke="#aaa" stroke-width="1"/>
  <path d="M927 432h196v11H927zM932 593h42v17h-42zM1543 436h61v18h-61z" fill="#fff"/>
  <text class="bt" x="927" y="441">Brushless DC Motor Fed by Six-Step Inverter</text><text class="m" x="1544" y="450">波形观测</text>
  ${F(928, 569, 979, 591)}${T(953, 579, '800')}${T(953, 596, 'Reference')}${T(953, 604, 'speed (RPM)')}
  ${W('979,581 1009,581')}<circle class="c" cx="1016" cy="580" r="7" style="fill:#fff"/>${T(1012, 580, '+')}${T(1016, 583, '-')}${W('1023,581 1039,581')}
  ${F(1039, 559, 1067, 601, 'url(#sub)')}${T(1042, 581, 'In', 'start')}${T(1065, 581, 'Out', 'end')}${T(1053, 608, 'fuzzy_pid')}
  ${W('1067,581 1110,581 1110,571')}${source(1105, 539, 32)}
  ${W('1117,539 1117,530 1157,530', false)}${W('1128,530 1128,487 1147,487', false)}${W('1124,571 1124,581 1145,581 1145,557 1157,557', false)}${W('1134,581 1134,493 1147,493', false)}
  ${dots([[1117, 538], [1128, 530], [1155, 530], [1124, 572], [1134, 581], [1155, 557], [1145, 487], [1145, 493]])}
  ${measure(1147, 481)}${W('1165,489 1183,489')}${S(1184, 479)}${T(1195, 506, 'Vdc')}
  ${F(1157, 514, 1202, 571)}${mosfet(1166, 518)}${T(1161, 530, '+')}${T(1161, 557, '-')}${T(1198, 524, 'g', 'middle', 'blue')}${T(1197, 537, 'A')}${T(1197, 551, 'B')}${T(1197, 564, 'C')}
  ${F(1258, 452, 1314, 480, 'url(#sub)')}${T(1261, 467, 'Gates', 'start')}${T(1310, 467, 'emf_abc', 'end')}${T(1286, 447, 'Gates')}
  ${F(1322, 451, 1381, 480, 'url(#sub)')}${T(1325, 466, 'emf_abc', 'start')}${T(1377, 466, 'Hall', 'end')}${T(1351, 446, 'Decoder')}
  ${W('1322,466 1314,466')}${W('1258,466 1229,466 1229,523 1203,523')}
  <path d="M1386 466h28v27h-22M1363 544h26M1374 544v-51h15" fill="none" stroke="#777" stroke-width="4"/><path d="M1386 466h28v27h-22M1374 542v-49h13" fill="none" stroke="#a49c98" stroke-width="1"/>
  <path class="d" d="M1381 466l7-3v6zM1390 493l-6-3v6zM1390 544l-6-4v8z"/><circle class="d" cx="1374" cy="544" r="3"/>${bar(1390, 484, 1394, 586)}
  ${F(1258, 495, 1279, 517)}<path class="c" d="M1262 513h7v-13h7"/>${W('1279,507 1283,507 1283,523 1305,523')}
  ${F(1306, 518, 1363, 569)}${motor(1338, 551)}<path d="M1320 524h18v10" fill="none" stroke="#5a55d0"/>
  ${T(1308, 523, 'Tm', 'start', 'blue')}${T(1308, 537, 'A', 'start')}${T(1308, 551, 'B', 'start')}${T(1308, 564, 'C', 'start')}${T(1358, 544, 'm')}
  ${W('1202,537 1305,537', false)}${W('1202,551 1305,551', false)}${W('1202,564 1305,564', false)}${W('1222,537 1222,587 1235,587', false)}${W('1218,551 1218,594 1235,594', false)}
  ${dots([[1204, 537], [1204, 551], [1204, 564], [1304, 537], [1304, 551], [1304, 564], [1222, 537], [1218, 551], [1233, 587], [1233, 594]])}
  ${measure(1235, 582)}${W('1253,590 1261,590')}${S(1262, 580)}${T(1272, 607, 'Vab')}
  ${W('1394,514 1585,514')}${W('1394,533 1585,533')}${S(1586, 503, 31, 39)}${T(1601, 498, 'is_a e_a')}
  ${W('1394,553 1484,553')}<path class="c" d="M1484 547v12l14-6z"/>${W('1498,553 1561,553')}${S(1562, 543)}${T(1572, 537, 'N (rpm)')}
  ${W('1394,574 1602,574')}${S(1602, 563)}${T(1613, 590, 'Te (N.m)')}${dot(1546, 554)}
  ${T(1398, 519, '<Stator current is_a (A)>', 'start')}${T(1398, 539, '<Stator back EMF e_a (V)>', 'start')}${T(1398, 559, '<Rotor speed wm (rad/s)>', 'start')}${T(1398, 580, '<Electromagnetic torque Te (N*m)>', 'start')}${T(1492, 566, 'rad2rpm')}
  ${W('1546,553 1546,621 1016,621 1016,588')}
  <path d="M947 656h65v28h-65z" fill="#555"/>${F(945, 654, 1010, 682)}${T(978, 664, 'Discrete', 'middle', 'blue')}${T(978, 672, '5e-06 s.', 'middle', 'blue')}
  <path d="M1348 643h19v18h-19z" fill="#555"/>${F(1346, 641, 1365, 659)}${T(1355, 649, '?')}${T(1356, 665, 'Double click here for more info')}
  </svg>`;
});

define('simulink-window', `:host{display:flex;flex-direction:column;height:100%;overflow:hidden;background:#fff;border-left:1px solid #999}
header{height:28px;display:flex;align-items:center;padding:0 33px 4px 8px;gap:5px;font-size:14px;color:#333;flex:none}header span{flex:1}header button{all:unset;display:flex;margin-left:34px}
.docs{height:26px;flex:none;display:flex;align-items:center;background:#eee;border-bottom:1px solid #aaa;padding-left:9px;gap:14px}
.docs b{font:12px/22px "Liberation Mono",monospace;background:#fff;color:#333;padding:0 9px;align-self:flex-end}
.work{flex:1;min-height:0;display:flex}
aside{width:37px;flex:none;background:#efefef;border-right:1px solid #aaa;display:flex;flex-direction:column;align-items:center;padding-top:9px}
aside .g{display:grid;justify-items:center;grid-auto-rows:31px;align-items:center}aside .g:last-child{margin:auto 0 -6px}aside hr{width:22px;border:0;border-top:1px solid #ccc;margin:13px 0 6px}
main{flex:1;min-width:0;display:flex;flex-direction:column;overflow:hidden}
.path{height:34px;flex:none;display:flex;align-items:center;gap:4px;padding-left:3px;font-size:14px;color:#222;border-bottom:2px solid #aaa}
.note{height:33px;flex:none;background:#ffffc8;border:1px solid #bbb;border-right:0;margin-top:1px;display:flex;align-items:center;gap:7px;padding-left:6px;font:15px/20px "Noto Sans CJK SC",sans-serif;font-weight:300;white-space:pre;color:#333}
.note a{color:#3a35b5}.note div{margin-left:4px}sl-canvas{flex:1;min-height:0;overflow:hidden}
.bar{height:12px;flex:none;background:#eee;display:flex;padding:1px 0 0 5px;justify-content:space-between}.bar i{width:57%;background:#c9c9c9}`,
`<header>${ic('model')}<span>power_brushlessDCmotor_mohu - Simulink</span><button aria-label="最小化">${ic('min')}</button><button aria-label="最大化">${ic('max')}</button></header>
<sl-toolstrip></sl-toolstrip>
<div class="docs">${ic('aleft')}${ic('aright')}${ic('aup')}<b>power_brushlessDCmotor_mohu</b></div>
<div class="work"><aside>${ic('hide')}<hr><div class="g">${['rzoom', 'fit', 'lines', 'anno', 'img', 'area'].map(ic).join('')}</div><div class="g">${['cam', 'book', 'dbl'].map(ic).join('')}</div></aside>
<main><div class="path">${ic('modelbox')}power_brushlessDCmotor_mohu ${ic('play')}</div>
<div class="note">${ic('info')}<span>要创建连接，请点击端口、终止模块或线段，然后点击兼容的突出显示的模型元素。</span><div><a href="#details">详细信息。 </a><a href="#hide">不再显示 </a></div></div>
<sl-canvas></sl-canvas><div class="bar"><svg width="8" height="11"><path d="M6 1 2 6l4 5" fill="none" stroke="#555" stroke-width="2"/></svg><i></i></div></main></div>`);

define('split-desktop', `:host{display:grid;grid-template-columns:803fr 876fr;grid-template-rows:100%;height:100vh;min-height:600px}::slotted(*){min-width:0;min-height:0}`,
  `<slot name="left"></slot><slot name="right"></slot>`);
</script>
</body>
</html>
